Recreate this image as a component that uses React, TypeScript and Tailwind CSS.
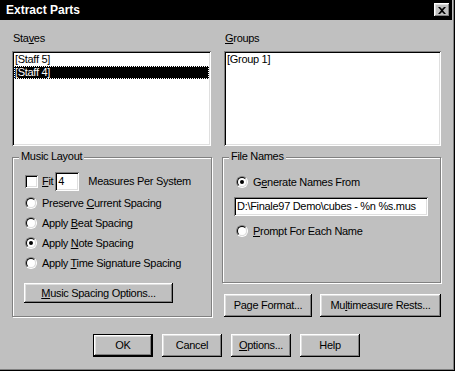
import React from 'react';

const sunken =
  'shadow-[inset_1px_1px_0_#808080,inset_-1px_-1px_0_#ffffff,inset_2px_2px_0_#000000,inset_-2px_-2px_0_#dfdfdf]';
const raised =
  'shadow-[inset_-1px_-1px_0_#000000,inset_1px_1px_0_#ffffff,inset_-2px_-2px_0_#808080,inset_2px_2px_0_#dfdfdf]';

const Radio: React.FC<{ checked?: boolean }> = ({ checked }) => (
  <span className="w-[12px] h-[12px] shrink-0 rounded-full border border-t-[#808080] border-l-[#808080] border-b-white border-r-white flex items-center justify-center">
    <span className="w-[10px] h-[10px] rounded-full border border-t-black border-l-black border-b-[#dfdfdf] border-r-[#dfdfdf] bg-white flex items-center justify-center">
      {checked && <span className="w-[4px] h-[4px] rounded-full bg-black" />}
    </span>
  </span>
);

const RadioRow: React.FC<{ checked?: boolean; children: React.ReactNode }> = ({ checked, children }) => (
  <div className="h-[20px] flex items-center gap-[5px]">
    <Radio checked={checked} />
    <span>{children}</span>
  </div>
);

const Button: React.FC<{ className?: string; children: React.ReactNode; isDefault?: boolean }> = ({
  className = '',
  children,
  isDefault,
}) => (
  <button
    className={`${className} ${raised} bg-[#c0c0c0] flex items-center justify-center ${
      isDefault ? 'border border-black' : ''
    }`}
  >
    {children}
  </button>
);

const GroupBox: React.FC<{ label: string; className?: string; children: React.ReactNode }> = ({
  label,
  className = '',
  children,
}) => (
  <div
    className={`${className} relative border border-[#808080] shadow-[inset_1px_1px_0_#ffffff,1px_1px_0_#ffffff]`}
  >
    <span className="absolute -top-[8px] left-[6px] bg-[#c0c0c0] px-[2px] leading-[13px]">{label}</span>
    {children}
  </div>
);

export default function App() {
  return (
    <div className="w-[455px] h-[371px] bg-[#c0c0c0] text-black text-[11px] leading-[13px] tracking-[-0.3px] font-['Liberation_Sans',Arial,sans-serif] shadow-[inset_-1px_-1px_0_#000000,inset_-2px_-2px_0_#808080] overflow-hidden">
      {/* Title bar */}
      <div className="w-[452px] h-[20px] bg-black flex items-center justify-between pl-[6px] pr-[2px]">
        <span className="text-white font-bold text-[12px] tracking-normal">Extract Parts</span>
        <button className={`w-[16px] h-[14px] bg-[#c0c0c0] ${raised} flex items-center justify-center`}>
          <svg width="8" height="7" viewBox="0 0 8 7">
            <path d="M0 0h2l2 2 2-2h2L5 3.5 8 7H6L4 5 2 7H0l3-3.5z" fill="#000" />
          </svg>
        </button>
      </div>

      <div className="pt-[12px] pl-[12px] pr-[14px]">
        {/* Lists */}
        <div className="flex gap-[13px]">
          <div className="w-[199px]">
            <div className="h-[13px] mb-[6px] pl-[1px]">
              Sta<u>v</u>es
            </div>
            <div className={`h-[95px] bg-white ${sunken} p-[2px]`}>
              <div className="h-[13px] px-[1px]">[Staff 5]</div>
              <div className="h-[13px] px-[1px] bg-black text-white outline outline-1 outline-dotted outline-white -outline-offset-1">
                [Staff 4]
              </div>
            </div>
          </div>
          <div className="w-[217px]">
            <div className="h-[13px] mb-[6px] pl-[1px]">
              <u>G</u>roups
            </div>
            <div className={`h-[95px] bg-white ${sunken} p-[2px]`}>
              <div className="h-[13px] px-[1px]">[Group 1]</div>
            </div>
          </div>
        </div>

        {/* Group boxes */}
        <div className="flex gap-[10px] mt-[11px]">
          <GroupBox label="Music Layout" className="w-[200px] h-[160px] pt-[14px] pl-[12px]">
            <div className="h-[19px] flex items-center">
              <span className={`w-[13px] h-[13px] bg-white ${sunken}`} />
              <span className="ml-[4px]">
                <u>F</u>it
              </span>
              <div className={`ml-[2px] w-[24px] h-[19px] bg-white ${sunken} flex items-center pl-[3px]`}>4</div>
              <span className="ml-[9px]">Measures Per System</span>
            </div>
            <div className="mt-[2px]">
              <RadioRow>
                Preserve <u>C</u>urrent Spacing
              </RadioRow>
              <RadioRow>
                Apply <u>B</u>eat Spacing
              </RadioRow>
              <RadioRow checked>
                Apply <u>N</u>ote Spacing
              </RadioRow>
              <RadioRow>
                Apply <u>T</u>ime Signature Spacing
              </RadioRow>
            </div>
            <Button className="mt-[10px] -ml-[1px] w-[149px] h-[20px]">
              <span>
                <u>M</u>usic Spacing Options...
              </span>
            </Button>
          </GroupBox>

          <div className="w-[219px]">
            <GroupBox label="File Names" className="h-[126px] pt-[14px] pl-[13px]">
              <RadioRow checked>
                G<u>e</u>nerate Names From
              </RadioRow>
              <div
                className={`mt-[5px] -ml-[2px] w-[194px] h-[19px] bg-white ${sunken} flex items-center pl-[3px] whitespace-nowrap`}
              >
                D:\Finale97 Demo\cubes - %n %s.mus
              </div>
              <div className="mt-[5px]">
                <RadioRow>
                  <u>P</u>rompt For Each Name
                </RadioRow>
              </div>
            </GroupBox>
            <div className="flex gap-[8px] mt-[11px] pl-[2px]">
              <Button className="w-[88px] h-[23px]">
                <span>
                  Pa<u>g</u>e Format...
                </span>
              </Button>
              <Button className="w-[121px] h-[23px]">
                <span>
                  Mu<u>l</u>timeasure Rests...
                </span>
              </Button>
            </div>
          </div>
        </div>

        {/* Bottom buttons */}
        <div className="flex justify-center gap-[9px] mt-[17px] pr-[0px]">
          <Button isDefault className="w-[60px] h-[23px]">
            OK
          </Button>
          <Button className="w-[60px] h-[23px]">Cancel</Button>
          <Button className="w-[60px] h-[23px]">
            <span>
              <u>O</u>ptions...
            </span>
          </Button>
          <Button className="w-[60px] h-[23px]">Help</Button>
        </div>
      </div>
    </div>
  );
}
